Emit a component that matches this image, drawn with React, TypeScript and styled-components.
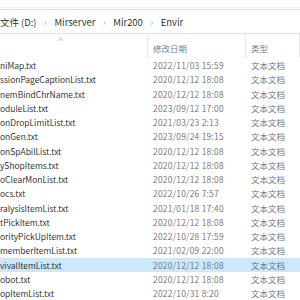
import React from "react";
import styled, { createGlobalStyle } from "styled-components";

const GlobalStyle = createGlobalStyle`
  html, body {
    margin: 0;
    padding: 0;
    background: #ffffff;
    overflow: hidden;
  }
`;

interface FileEntry {
  name: string;
  modified: string;
  selected?: boolean;
}

const files: FileEntry[] = [
  { name: "niMap.txt", modified: "2022/11/03 15:59" },
  { name: "ssionPageCaptionList.txt", modified: "2020/12/12 18:08" },
  { name: "nemBindChrName.txt", modified: "2020/12/12 18:08" },
  { name: "oduleList.txt", modified: "2023/09/12 17:00" },
  { name: "onDropLimitList.txt", modified: "2021/03/23 2:13" },
  { name: "onGen.txt", modified: "2023/09/24 19:15" },
  { name: "onSpAbilList.txt", modified: "2020/12/12 18:08" },
  { name: "yShopItems.txt", modified: "2020/12/12 18:08" },
  { name: "oClearMonList.txt", modified: "2020/12/12 18:08" },
  { name: "ocs.txt", modified: "2022/10/26 7:57" },
  { name: "ralysisItemList.txt", modified: "2021/01/18 17:40" },
  { name: "tPickItem.txt", modified: "2020/12/12 18:08" },
  { name: "orityPickUpItem.txt", modified: "2022/10/28 17:59" },
  { name: "memberItemList.txt", modified: "2021/02/09 22:00" },
  { name: "vivalItemList.txt", modified: "2020/12/12 18:08", selected: true },
  { name: "obot.txt", modified: "2020/12/12 18:08" },
  { name: "opItemList.txt", modified: "2022/10/31 8:20" },
];

const crumbs = ["文件 (D:)", "Mirserver", "Mir200", "Envir"];

export default function App() {
  return (
    <Explorer>
      <GlobalStyle />
      <Toolbar />
      <AddressBar>
        {crumbs.map((c, i) => (
          <React.Fragment key={c}>
            {i > 0 && <Chevron>›</Chevron>}
            <Crumb>{c}</Crumb>
          </React.Fragment>
        ))}
      </AddressBar>

      <HeaderRow>
        <NameHeader>
          <SortArrow viewBox="0 0 8 5">
            <path d="M1 4 L4 1 L7 4" fill="none" stroke="#9aa3ad" strokeWidth="0.9" />
          </SortArrow>
        </NameHeader>
        <HeaderCell>修改日期</HeaderCell>
        <HeaderCell>类型</HeaderCell>
      </HeaderRow>

      <FileList>
        {files.map(f => (
          <FileRow key={f.name} $selected={f.selected}>
            <NameCell>{f.name}</NameCell>
            <DateCell>{f.modified}</DateCell>
            <InfoCell>文本文档</InfoCell>
          </FileRow>
        ))}
      </FileList>
    </Explorer>
  );
}

const Explorer = styled.div`
  width: 300px;
  height: 300px;
  overflow: hidden;
  background: #ffffff;
  font-family: "Noto Sans CJK SC", "Noto Sans", sans-serif;
  font-weight: 350;
`;

const Toolbar = styled.div`
  height: 7px;
  border-bottom: 1px solid #f0f0f0;
`;

const AddressBar = styled.div`
  display: flex;
  align-items: center;
  box-sizing: border-box;
  height: 25px;
  padding-top: 2px;
  margin-top: 1px;
  border-top: 1px solid #e3e3e3;
  border-bottom: 1px solid #e3e3e3;
  font-size: 9.5px;
  color: #1b1b1b;
  white-space: nowrap;
`;

const Crumb = styled.span`
  line-height: 1;
`;

const Chevron = styled.span`
  width: 18px;
  text-align: center;
  color: #8a8a8a;
  font-size: 9px;
`;

const columns = "148px 98px 1fr";

const HeaderRow = styled.div`
  display: grid;
  grid-template-columns: ${columns};
  height: 24px;
`;

const NameHeader = styled.div`
  position: relative;
  border-right: 1px solid #e8e8e8;
`;

const SortArrow = styled.svg`
  position: absolute;
  left: 57px;
  top: 3px;
  width: 7px;
  height: 5px;
`;

const HeaderCell = styled.div`
  display: flex;
  align-items: center;
  padding: 4px 0 0 5px;
  font-size: 8.5px;
  color: #6b7785;
  border-right: 1px solid #e8e8e8;
`;

const FileList = styled.div`
  display: flex;
  flex-direction: column;
`;

const FileRow = styled.div<{ $selected?: boolean }>`
  display: grid;
  grid-template-columns: ${columns};
  align-items: center;
  height: 14.25px;
  background: ${p => (p.$selected ? "#cce8ff" : "transparent")};
  font-size: 8.5px;
  white-space: nowrap;
`;

const NameCell = styled.div`
  color: #1a1a1a;
  overflow: hidden;
`;

const InfoCell = styled.div`
  padding-left: 5px;
  color: #6d6d6d;
`;

const DateCell = styled(InfoCell)`
  letter-spacing: 0.25px;
`;
